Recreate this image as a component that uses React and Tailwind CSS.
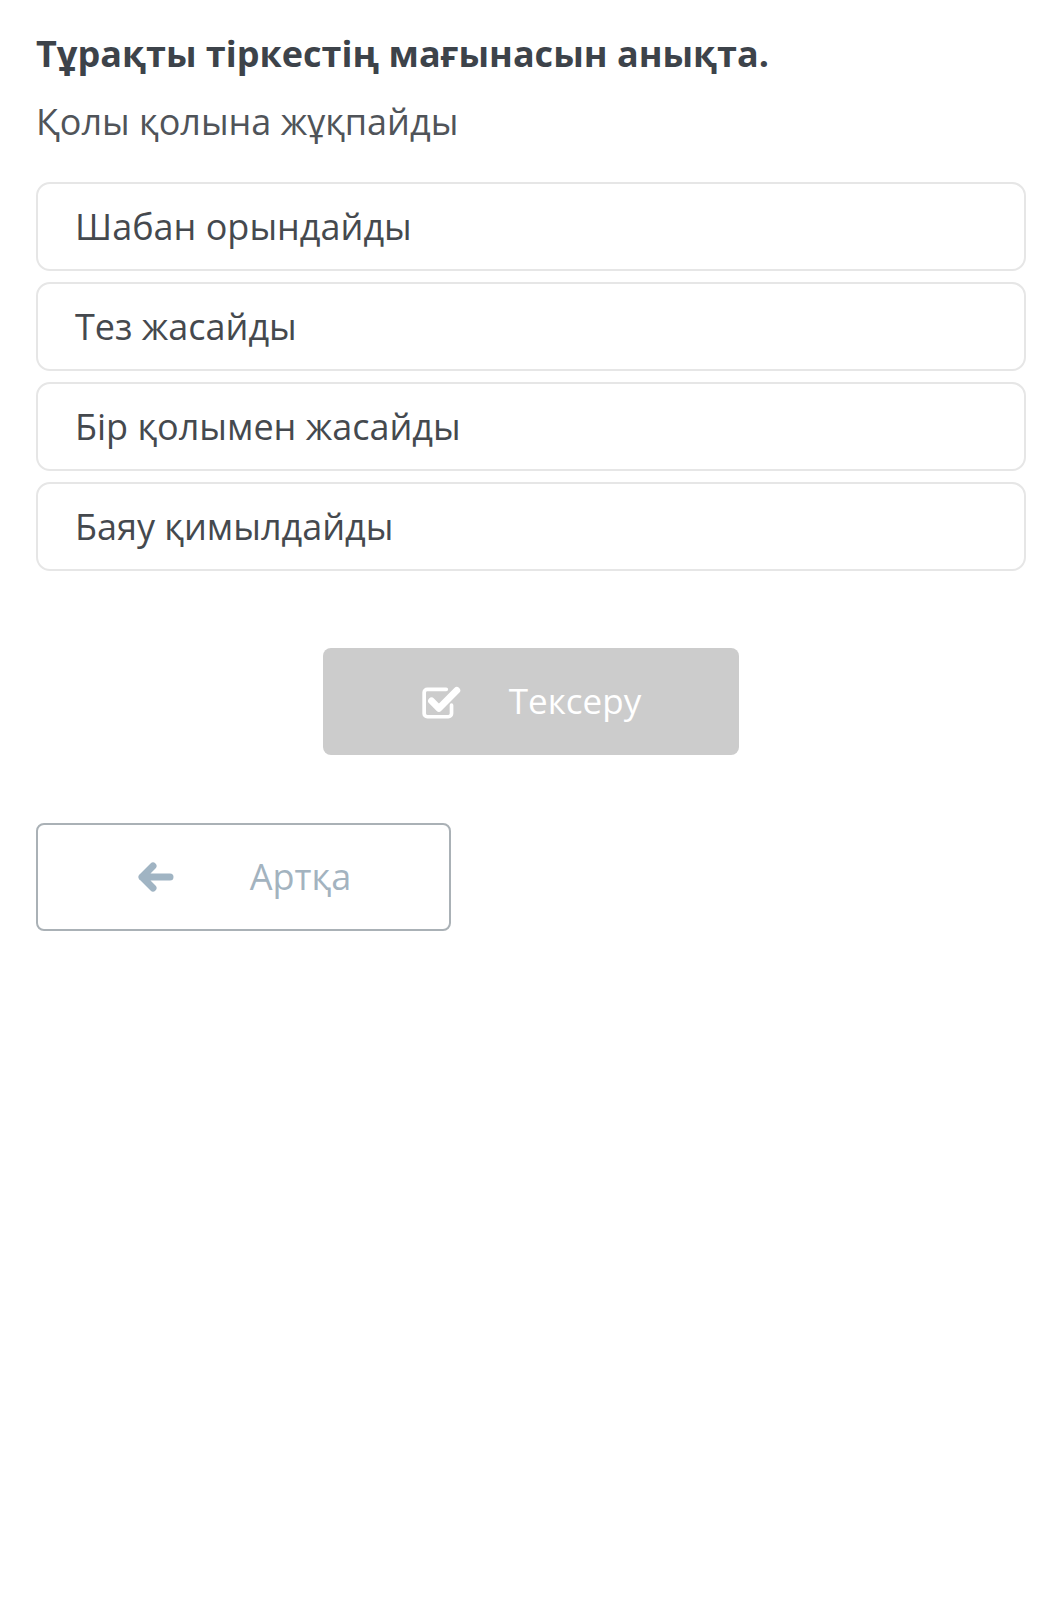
import React, { useState } from 'react';

const options = [
  'Шабан орындайды',
  'Тез жасайды',
  'Бір қолымен жасайды',
  'Баяу қимылдайды',
];

const CheckSquareIcon = () => (
  <svg width="40" height="34" viewBox="0 0 38 32" fill="none">
    <path
      d="M24 4H6a3 3 0 0 0-3 3v20a3 3 0 0 0 3 3h20a3 3 0 0 0 3-3v-8"
      stroke="white"
      strokeWidth="3.5"
      strokeLinecap="round"
      strokeLinejoin="round"
    />
    <path
      d="M10 15l7 7L34 5"
      stroke="white"
      strokeWidth="6.5"
      strokeLinecap="round"
      strokeLinejoin="round"
    />
  </svg>
);

const ArrowLeftIcon = () => (
  <svg width="38" height="32" viewBox="0 0 38 32" fill="none">
    <path
      d="M34 16H6M17 5L6 16l11 11"
      stroke="#a0b4c3"
      strokeWidth="7"
      strokeLinecap="round"
      strokeLinejoin="round"
    />
  </svg>
);

const App = () => {
  const [selected, setSelected] = useState(null);

  return (
    <div className="w-[1042px] min-h-[1618px] bg-white pl-[36px] pr-[16px] pt-[34px] font-['Open_Sans',sans-serif]">
      {/* Question */}
      <h1 className="text-[36px] leading-[40px] font-bold text-[#3d434a]">
        Тұрақты тіркестің мағынасын анықта.
      </h1>
      <p className="mt-[28px] text-[36px] leading-[40px] text-[#505459]">
        Қолы қолына жұқпайды
      </p>

      {/* Options */}
      <div className="mt-[40px] flex flex-col gap-[11px]">
        {options.map((opt, idx) => (
          <div
            key={idx}
            onClick={() => setSelected(idx)}
            className={`h-[89px] flex items-center pl-[37px] rounded-[14px] border-2 ${
              selected === idx ? 'border-[#9fb3c2]' : 'border-[#e6e6e6]'
            } text-[36px] text-[#45494e] cursor-pointer`}
          >
            {opt}
          </div>
        ))}
      </div>

      {/* Check button */}
      <div className="mt-[77px] flex justify-center">
        <button className="w-[416px] h-[107px] rounded-[8px] bg-[#cccccc] flex items-center justify-center gap-[48px] text-white text-[35px]">
          <CheckSquareIcon />
          <span>Тексеру</span>
        </button>
      </div>

      {/* Back button */}
      <div className="mt-[68px]">
        <button className="w-[415px] h-[108px] rounded-[8px] border-2 border-[#aab1b6] bg-white flex items-center justify-center gap-[76px] text-[#a3b3bf] text-[36px]">
          <ArrowLeftIcon />
          <span>Артқа</span>
        </button>
      </div>
    </div>
  );
};

export default App;
